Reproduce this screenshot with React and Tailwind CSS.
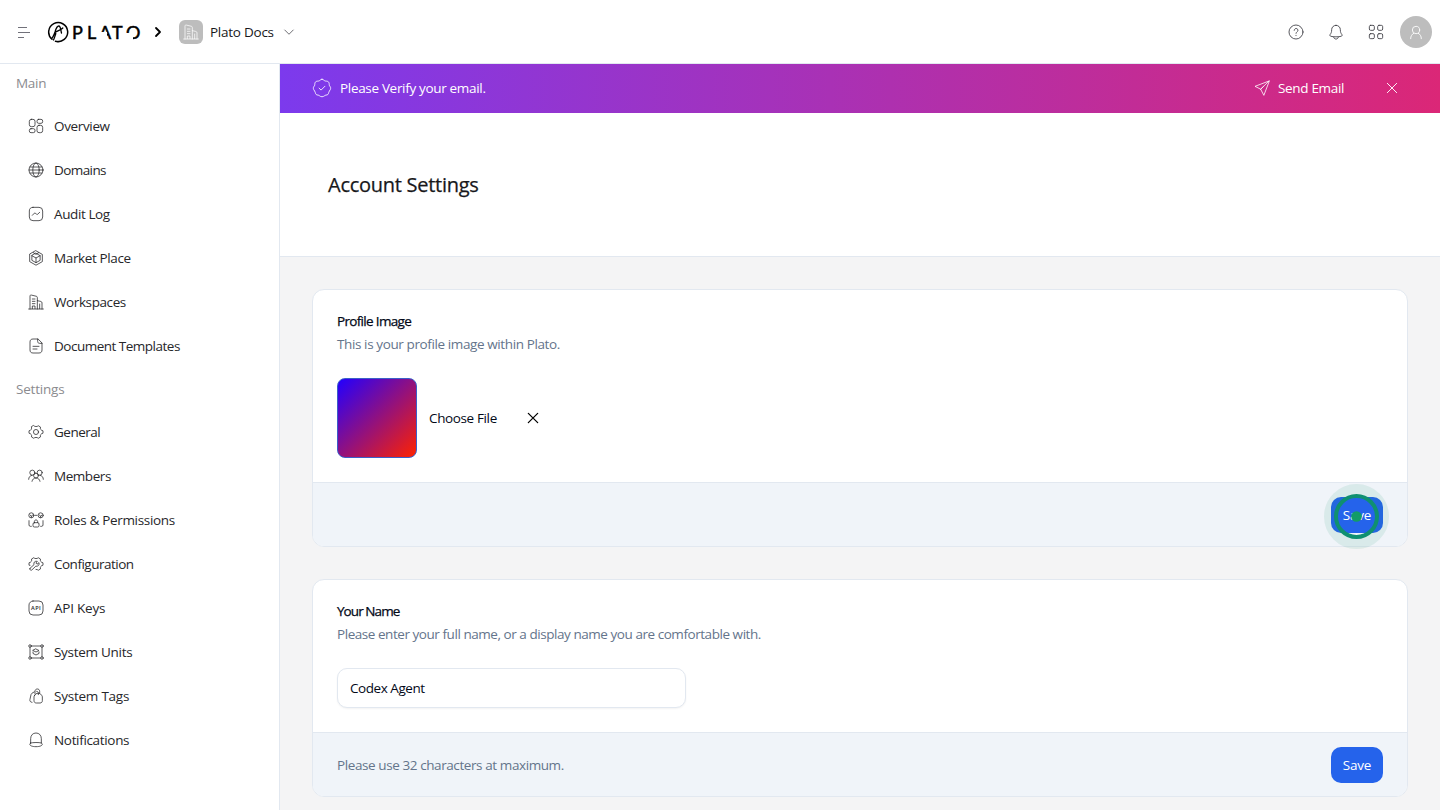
import React from "react";

function Icon({ size = 16, sw = 1.15, className = "", children }) {
  return (
    <svg width={size} height={size} viewBox="0 0 24 24" fill="none" stroke="currentColor" strokeWidth={sw} strokeLinecap="round" strokeLinejoin="round" className={`shrink-0 ${className}`}>
      {children}
    </svg>
  );
}

const badge = "M12 1.500C14 1.500 14.300 3.300 16 3.600 18 3.900 19.500 3.700 20.300 5.600 21 7.300 20.300 8.300 21.200 9.600 22.300 11 22.800 11.800 22 13.800 21.300 15.500 20.300 15.800 20 17.500 19.700 19.500 18.800 20.500 16.800 20.500 15.200 20.500 14.500 22.500 12 22.500 9.500 22.500 8.800 20.500 7.200 20.500 5.200 20.500 4.300 19.500 4 17.500 3.700 15.800 2.700 15.500 2 13.800 1.200 11.800 1.700 11 2.800 9.600 3.700 8.300 3 7.300 3.700 5.600 4.500 3.700 6 3.900 8 3.600 9.700 3.300 10 1.500 12 1.500z";
const gear = "M8.600 2.600c1.600 1.700 5.200 1.700 6.800 0l3.300 1.900c-.9 2.500.8 5.400 3.800 5.700v3.600c-3 .3-4.700 3.200-3.800 5.700l-3.300 1.900c-1.600-1.700-5.200-1.700-6.800 0l-3.300-1.900C6.200 17 4.500 14.100 1.500 13.800v-3.600c3-.3 4.700-3.200 3.800-5.700z";

const shapes = {
  overview: (
    <>
      <rect x="2" y="2" width="8.500" height="11" rx="3" />
      <rect x="13.500" y="2" width="8.500" height="6" rx="2.500" />
      <rect x="2" y="16" width="8.500" height="6" rx="2.500" />
      <rect x="13.500" y="11" width="8.500" height="11" rx="3" />
    </>
  ),
  globe: (
    <>
      <circle cx="12" cy="12" r="10.500" />
      <ellipse cx="12" cy="12" rx="4.800" ry="10.500" />
      <path d="M1.500 12h21M3 7.500h18M3 16.500h18" />
    </>
  ),
  audit: (
    <>
      <rect x="2" y="2" width="20" height="20" rx="5.500" />
      <path d="M6.500 14l3-3.200c.6-.6 1.200-.5 1.700 0l1.600 1.600c.6.5 1.200.5 1.700 0l3-3" />
    </>
  ),
  market: (
    <>
      <path d="M12 1.200l9.500 5.400v10.800L12 22.800l-9.500-5.400V6.600z" />
      <path d="M12 5l6.200 3.500v7L12 19l-6.200-3.500v-7z" />
      <path d="M5.800 8.500L12 12l6.200-3.500M12 12v7M8 4l4 2.500L16 4" />
    </>
  ),
  building: (
    <>
      <path d="M1 22.500h22M3 22.500V3.200c0-1.200.8-1.900 2-1.600l7.500 1.800c1 .3 1.500.9 1.500 2v17.100M14 10l5.300 1.200c1.100.3 1.700 1 1.700 2v9.300" />
      <path d="M6.500 22v-4h4v4M6.500 7.500h4M6.500 11h4M6.500 14.500h4M17.500 15v7" />
    </>
  ),
  doc: (
    <>
      <path d="M14.500 1.500H7.500C4.500 1.500 3 3.200 3 6v12c0 2.800 1.500 4.500 4.500 4.500h9c3 0 4.500-1.700 4.500-4.500V8z" />
      <path d="M14.500 1.500V5c0 2 1 3 3 3H21M7.500 12.500h9M7.500 16.500h6" />
    </>
  ),
  gear: (
    <>
      <path d={gear} />
      <circle cx="12" cy="12" r="3.800" />
    </>
  ),
  members: (
    <>
      <circle cx="6.500" cy="7" r="3.800" />
      <circle cx="17.500" cy="7" r="3.800" />
      <circle cx="12" cy="11.500" r="3.600" />
      <path d="M1 17c0-3.500 2-5.500 5-6M23 17c0-3.500-2-5.500-5-6M6 20c.5-3 2.800-5 6-5s5.500 2 6 5" />
    </>
  ),
  roles: (
    <>
      <circle cx="5" cy="5" r="3.800" />
      <circle cx="19" cy="5" r="3.800" />
      <path d="M10.500 5h3M3 4.500l2 1.800 2-1.800M17 4.500l2 1.800 2-1.800M5 6.300v2M19 6.300v2M1.500 13v6.500c0 1.200.8 2 2 2H5M22.500 13v6.500c0 1.200-.8 2-2 2H19" />
      <rect x="7.500" y="16" width="9" height="6.500" rx="2" />
      <path d="M9.500 16v-1.500c0-3.400 5-3.400 5 0V16" />
    </>
  ),
  config: (
    <>
      <path d="M3 14l-1.500-.2v-3.600c3-.3 4.700-3.200 3.800-5.700l3.300-1.900c1.600 1.700 5.200 1.700 6.800 0l3.300 1.900c-.9 2.500.8 5.400 3.800 5.700v3.600c-3 .3-4.700 3.200-3.800 5.700l-3.300 1.900c-1-1-2-1.300-3.400-1.300" />
      <path d="M3 18.500l6-5.500c-1-3.500 1.500-6 5-5l-2.200 2.500 1.700 1.800L16.500 10c1 3.500-1.500 6-4.800 5.300l-6 5.700c-1.600 1.300-4-.9-2.700-2.500z" />
    </>
  ),
  api: (
    <>
      <rect x="1.500" y="1.500" width="21" height="21" rx="6" />
      <text x="12.200" y="15.200" fontSize="8.400" fontWeight="600" textAnchor="middle" fill="currentColor" stroke="none" letterSpacing="0.8" fontFamily="Open Sans, sans-serif">API</text>
    </>
  ),
  units: (
    <>
      <circle cx="3" cy="3" r="1.900" />
      <circle cx="21" cy="3" r="1.900" />
      <circle cx="3" cy="21" r="1.900" />
      <circle cx="21" cy="21" r="1.900" />
      <path d="M5 3h14M5 21h14M3 5v14M21 5v14M12 7.500l4.500 2.300L12 12 7.500 9.800zM7.500 12v2.200l4.500 2.300 4.500-2.300V12" />
    </>
  ),
  tags: (
    <>
      <path d="M10 11l2-2.200c1.300-1.300 5.200-1.300 6.500 0l2 2.200c.7.700 1 1.400 1 2.300V19c0 2.200-1.300 3.500-3.500 3.500h-5.500C10.300 22.500 9 21.200 9 19v-5.700c0-.9.300-1.600 1-2.300z" />
      <path d="M6 21.500c-2.400-.3-3.600-1.800-3.100-4.200L4.500 10c.3-1 .7-1.600 1.500-2.200l3.500-2M10.500 9V5c0-4.700 7-4.700 7 0v3M15.500 10V7.500c0-1.500-1-2.500-2.500-2.500" />
    </>
  ),
  notif: (
    <>
      <path d="M4 16.500V10c0-5 3.200-8.500 8-8.500s8 3.500 8 8.500v6.500" />
      <path d="M4 16.500c-3.400 2-.8 5.500 8 5.500s11.400-3.500 8-5.500c-3-1-13-1-16 0z" />
    </>
  ),
};

const mainItems = [
  ["Overview", "overview", "tracking-[-0.350px]"],
  ["Domains", "globe", "tracking-[-0.580px]"],
  ["Audit Log", "audit", "tracking-[-0.400px]"],
  ["Market Place", "market", "tracking-[-0.370px]"],
  ["Workspaces", "building", "tracking-[-0.400px]"],
  ["Document Templates", "doc", "tracking-[-0.500px]"],
];
const settingItems = [
  ["General", "gear", "tracking-[-0.500px]"],
  ["Members", "members", "tracking-[-0.450px]"],
  ["Roles & Permissions", "roles", "tracking-[-0.320px]"],
  ["Configuration", "config", "tracking-[-0.500px]"],
  ["API Keys", "api", "tracking-[-0.230px]"],
  ["System Units", "units", "tracking-[-0.280px]"],
  ["System Tags", "tags", "tracking-[-0.230px]"],
  ["Notifications", "notif", "tracking-[-0.330px]"],
];

function NavItem({ item: [label, icon, tracking] }) {
  return (
    <a className="flex h-11 items-center gap-2.5 pl-7 text-[#27272a]">
      <Icon>{shapes[icon]}</Icon>
      <span className={`whitespace-nowrap ${tracking}`}>{label}</span>
    </a>
  );
}

function Logo() {
  return (
    <div className="flex h-6 w-[96px] items-center gap-1">
      <svg width="22" height="22" viewBox="0 0 22 22" fill="none" stroke="#000" strokeWidth="1.500" strokeLinecap="round" className="shrink-0">
        <path d="M5 18.300A9.500 9.500 0 1 1 8.500 20.200M8.500 20.200c1 .5 2.500.5 3.500.3" />
        <path d="M4.500 17.500C6 16.500 7 14 8 11c1-3.500 2-6 3.800-6 1.700 0 1.800 3 2.700 7M6.500 19c1-2 1.500-4 2.300-6.500M8 11.500c2-1.800 6-2.300 7.800-4.500" strokeWidth="1.300" />
      </svg>
      <div className="relative flex h-[22px] w-[72px] font-['Lato',sans-serif] text-[18px] leading-[22px] text-black [-webkit-text-stroke:0.500px_#000]">
        <span className="-ml-px w-[15px]">P</span>
        <span className="w-[12px]">L</span>
        <span className="w-[13px]">A</span>
        <span className="w-[14px]">T</span>
        <span className="w-[16px]">O</span>
        <span className="absolute top-[11px] left-[25px] h-[8px] w-[9px] bg-white" />
        <span className="absolute top-[12px] left-[52px] h-[8px] w-[8px] bg-white" />
      </div>
    </div>
  );
}

function Header() {
  return (
    <header className="flex h-16 shrink-0 items-center border-b border-[#e2e8f0] bg-white pr-2 pl-4">
      <svg width="16" height="16" viewBox="0 0 16 16" stroke="#71717a" className="shrink-0">
        <path d="M2 3.500h9M2 8.500h12M2 13.500h6" />
      </svg>
      <div className="ml-[15px]"><Logo /></div>
      <svg width="8" height="12" viewBox="0 0 8 12" fill="none" stroke="#000" strokeWidth="1.800" strokeLinecap="round" strokeLinejoin="round" className="ml-[11px]">
        <path d="M2 2l4 4-4 4" />
      </svg>
      <div className="ml-[17px] flex size-6 items-center justify-center rounded-md bg-[#bdbdbd] text-white">
        <Icon sw={1.100}>{shapes.building}</Icon>
      </div>
      <span className="ml-[7px] w-[64px] whitespace-nowrap tracking-[-0.250px] text-[#18181b]">Plato Docs</span>
      <Icon sw={1.500} size={12} className="ml-[9px] text-[#3f3f46]"><path d="M3.500 8L12 16.500 20.500 8" /></Icon>
      <div className="ml-auto flex items-center gap-6 text-[#3f3f46]">
        <Icon sw={1.300}>
          <circle cx="12" cy="12" r="10.500" />
          <path d="M9.300 9.500c0-3.800 5.600-3.800 5.600 0 0 2.200-2.900 2.300-2.900 4.500M12 17v.3" />
        </Icon>
        <Icon sw={1.300}>
          <path d="M12 2c-4 0-6.500 3-6.500 6.500 0 4-1 5.500-2.300 7.200-.8 1.100-.3 2.500 1.200 2.800 4.700 1 10.500 1 15.200 0 1.500-.3 2-1.700 1.200-2.800-1.300-1.700-2.300-3.200-2.300-7.200C18.500 5 16 2 12 2zM8.500 19.500c0 4.300 7 4.300 7 0" />
        </Icon>
        <Icon sw={1.300}>
          <rect x="2" y="2" width="7.500" height="7.500" rx="2" />
          <rect x="14.500" y="2" width="7.500" height="7.500" rx="2" />
          <rect x="2" y="14.500" width="7.500" height="7.500" rx="2" />
          <rect x="14.500" y="14.500" width="7.500" height="7.500" rx="2" />
        </Icon>
        <div className="-ml-2 flex size-8 items-center justify-center rounded-full bg-[#bdbdbd] text-white">
          <Icon sw={1.300}>
            <circle cx="12" cy="9" r="5.500" />
            <path d="M4 22c0-4 1.800-6.500 4.500-8M20 22c0-4-1.800-6.500-4.500-8" />
          </Icon>
        </div>
      </div>
    </header>
  );
}

function SaveButton({ children }) {
  return (
    <button className="relative flex h-9 w-[52px] items-center justify-center rounded-[10px] bg-[#2563eb] tracking-[-0.200px] text-white">
      Save
      {children}
    </button>
  );
}

function ClickMarker() {
  return (
    <svg width="66" height="66" viewBox="0 0 66 66" fill="none" className="absolute -top-[14px] -left-[7px] max-w-none">
      <circle cx="32.500" cy="33.500" r="27" stroke="#109070" strokeOpacity="0.1" strokeWidth="11" />
      <circle cx="32.500" cy="33.500" r="20.500" stroke="#0f9070" strokeWidth="4" />
      <circle cx="32.500" cy="33.500" r="5.300" fill="#129c68" />
    </svg>
  );
}

function Card({ title, titleClass, text, textClass, children, footer, action }) {
  return (
    <section className="relative rounded-xl border border-[#e2e8f0] bg-white">
      <div className="px-6 pt-5 pb-6">
        <h2 className={`h-[22px] leading-[22px] text-[#020817] [-webkit-text-stroke:0.250px_#020817] ${titleClass}`}>{title}</h2>
        <p className={`h-6 leading-6 text-[#64748b] ${textClass}`}>{text}</p>
        {children}
      </div>
      <div className="flex h-16 items-center justify-between rounded-b-[11px] border-t border-[#e2e8f0] bg-[#f0f4f9] px-6 text-[#64748b]">
        <span className="tracking-[-0.410px]">{footer}</span>
        {action}
      </div>
    </section>
  );
}

export default function App() {
  return (
    <div className="flex h-[810px] w-[1440px] flex-col overflow-hidden bg-white font-['Open_Sans',sans-serif] text-[13.500px] leading-5">
      <Header />
      <div className="flex min-h-0 flex-1">
        <aside className="w-[280px] shrink-0 border-r border-[#e2e8f0] bg-white">
          <div className="mb-0.5 flex h-[38px] items-center pl-4 text-[#8b8b8f]"><span className="tracking-[-0.300px]">Main</span></div>
          {mainItems.map((item) => <NavItem key={item[0]} item={item} />)}
          <div className="flex h-[42px] items-center pl-4 text-[#8b8b8f]"><span className="tracking-[-0.200px]">Settings</span></div>
          {settingItems.map((item) => <NavItem key={item[0]} item={item} />)}
        </aside>
        <main className="flex min-w-0 flex-1 flex-col bg-[#f4f4f5]">
          <div className="flex h-[49px] shrink-0 items-center bg-linear-to-r/srgb from-[#7c3aed] to-[#db2777] pr-10 pb-px pl-8 text-white">
            <Icon size={20} sw={1}>
              <path d={badge} />
              <path d="M8.500 12.200l2.400 2.300 4.600-4.600" />
            </Icon>
            <span className="ml-2 tracking-[-0.320px]">Please Verify your email.</span>
            <Icon size={16} sw={1.200} className="ml-auto">
              <path d="M22.500 1.500L1.500 9.500l8.500 4.300 4.500 8.700zM10 13.800L22.500 1.500M10 13.800l4-4" />
            </Icon>
            <span className="ml-2 w-[66px] whitespace-nowrap tracking-[-0.330px]">Send Email</span>
            <Icon size={16} sw={1.400} className="ml-10"><path d="M5 5l14 14M19 5L5 19" /></Icon>
          </div>
          <div className="flex h-36 shrink-0 items-center border-b border-[#e2e8f0] bg-white pl-12">
            <h1 className="text-[20px] tracking-[-0.270px] text-[#18181b] [-webkit-text-stroke:0.250px_#18181b]">Account Settings</h1>
          </div>
          <div className="flex flex-col gap-8 px-8 pt-8">
            <Card title="Profile Image" titleClass="tracking-[-0.670px]" text="This is your profile image within Plato." textClass="tracking-[-0.390px]" action={<SaveButton><ClickMarker /></SaveButton>}>
              <div className="mt-[22px] flex items-center">
                <div className="size-20 rounded-lg border border-[#3b5fc9] bg-linear-to-br/srgb from-[#2200ff] to-[#ff2200]" />
                <span className="ml-3 w-[68px] whitespace-nowrap tracking-[-0.370px] text-[#020817]">Choose File</span>
                <Icon size={16} sw={1.900} className="ml-7 text-black"><path d="M5 5l14 14M19 5L5 19" /></Icon>
              </div>
            </Card>
            <Card title="Your Name" titleClass="tracking-[-0.930px]" text="Please enter your full name, or a display name you are comfortable with." textClass="tracking-[-0.450px]" footer="Please use 32 characters at maximum." action={<SaveButton />}>
              <div className="mt-[22px] flex h-10 w-[349px] items-center rounded-[10px] border border-[#e2e8f0] bg-white px-3 tracking-[-0.450px] text-[#020817] shadow-xs">Codex Agent</div>
            </Card>
          </div>
        </main>
      </div>
    </div>
  );
}
